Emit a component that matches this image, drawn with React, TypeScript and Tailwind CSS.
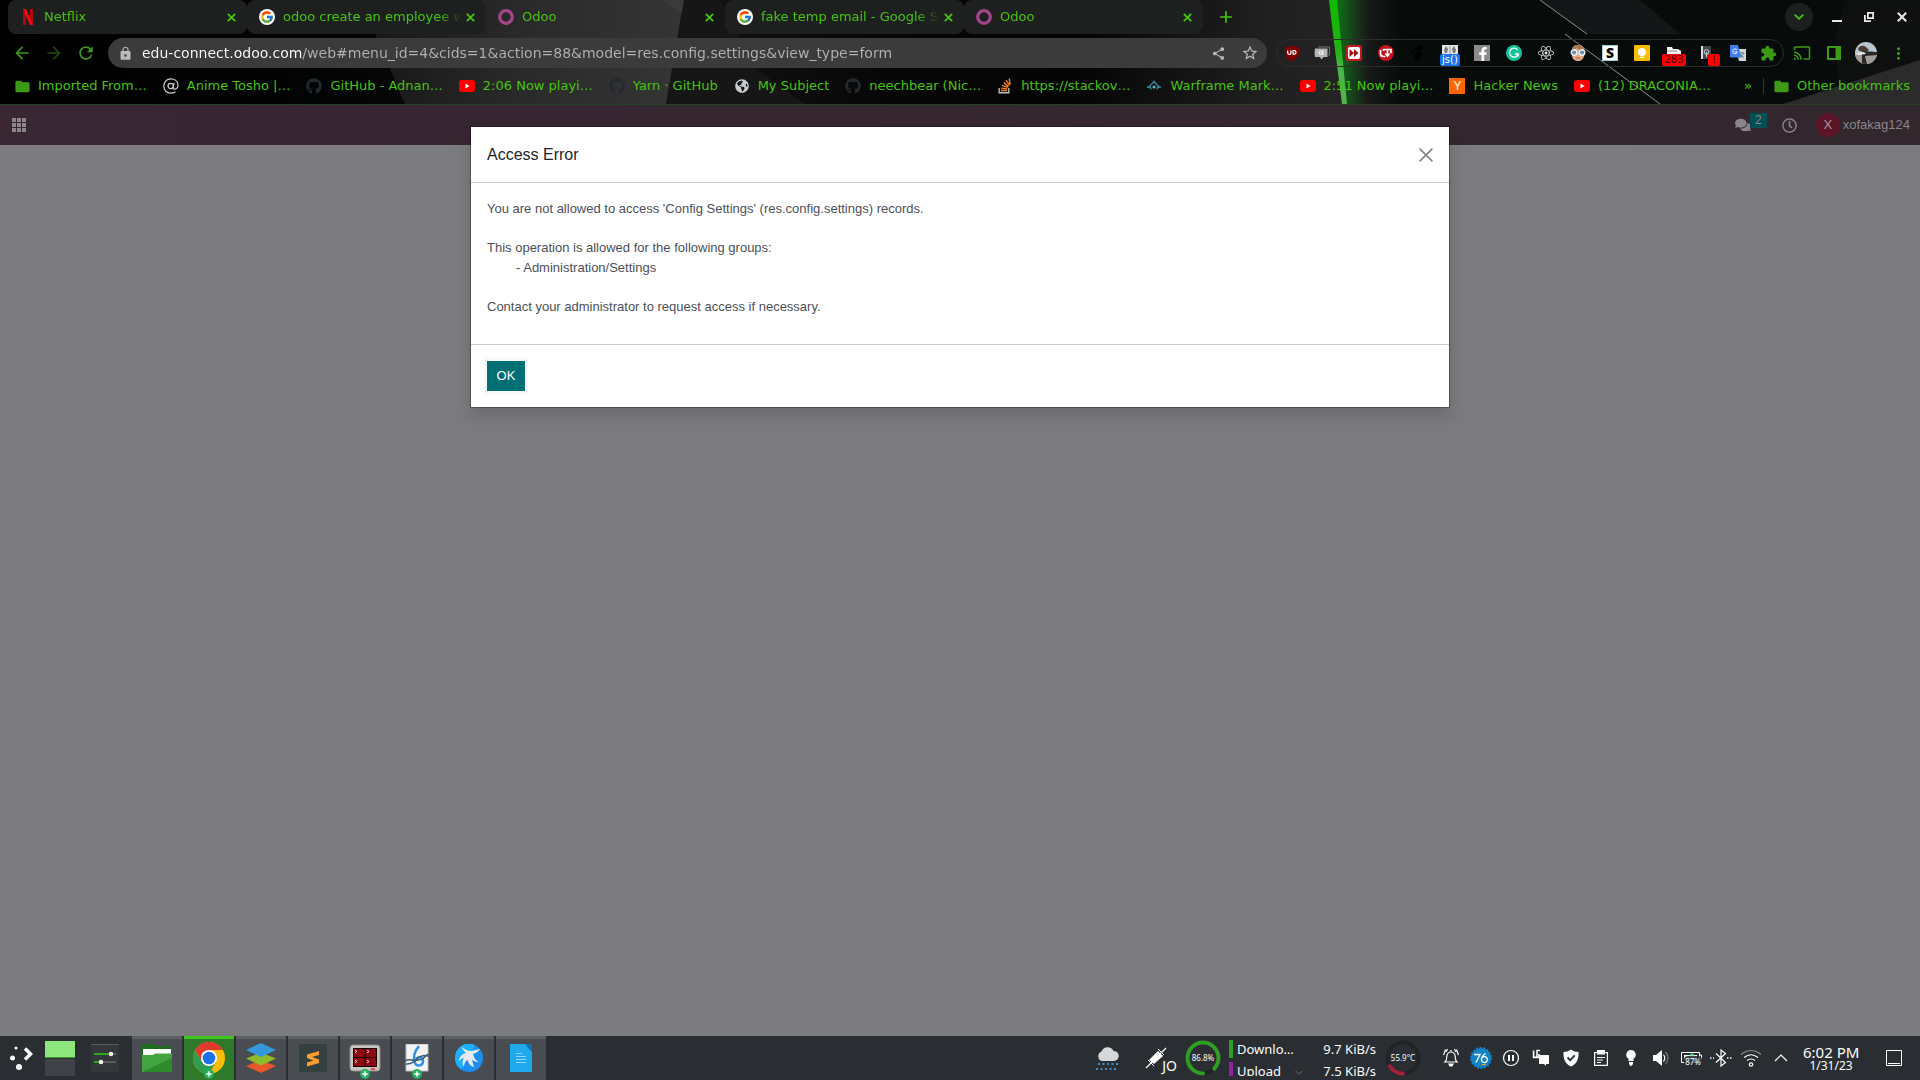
import React from "react";
import { FcGoogle } from "react-icons/fc";
import { FaGithub, FaFacebookF, FaReact, FaComments, FaRegClock, FaGlobeAmericas } from "react-icons/fa";
import {
  MdArrowBack, MdArrowForward, MdRefresh, MdLock, MdShare, MdStarBorder, MdExtension, MdCast, MdFolder, MdAdd, MdMoreVert,
} from "react-icons/md";

type Item = { icon: React.ReactNode; label: string };

/* ---------- favicons ---------- */

const Netflix = () => (
  <svg width="16" height="16" viewBox="0 0 16 16">
    <path d="M3 0h3v16H3zM10 0h3v16h-3z" fill="#b1060f" />
    <path d="M3 0h3l7 16h-3z" fill="#f40612" />
  </svg>
);
const Google = () => (
  <span className="flex size-4 items-center justify-center rounded-full bg-white">
    <FcGoogle size={14} />
  </span>
);
const OdooRing = () => (
  <svg width="16" height="16" viewBox="0 0 16 16">
    <circle cx="8" cy="8" r="6.300" fill="none" stroke="#a24689" strokeWidth="3.300" />
  </svg>
);
const At = () => (
  <svg width="16" height="16" viewBox="0 0 16 16" fill="none" stroke="#d0d0d0" strokeWidth="1.200">
    <circle cx="7.700" cy="8" r="2.700" />
    <path d="M11 4.800 10.300 9.500q-.2 1.800 1.300 1.700C14 11 15.200 9 15 6.800 14.600 3 11.500.8 8 .8 3.800.8.800 4 .8 8.200c0 4.200 3 7 7 7 2 0 3.400-.5 4.700-1.400" />
  </svg>
);
const Youtube = () => (
  <svg width="16" height="16" viewBox="0 0 16 16">
    <rect y="2" width="16" height="12" rx="3" fill="#f00" />
    <path d="M6.500 5.600v4.800L10.600 8z" fill="#fff" />
  </svg>
);
const Lotus = () => (
  <svg width="16" height="16" viewBox="0 0 16 16" fill="none" stroke="#2f7f97" strokeWidth="1.500">
    <path d="M1 9.500 4 8l4-4.500L12 8l3 1.500M4 8l1 3.500M12 8l-1 3.500" />
    <circle cx="8" cy="9" r="1.600" fill="#5bb3c9" stroke="none" />
  </svg>
);
const Hacker = () => (
  <span className="flex size-4 items-center justify-center bg-[#f60] font-['Liberation_Sans'] text-[12px] leading-4 text-white">Y</span>
);
const Folder = () => <MdFolder size={17} className="-mx-px shrink-0 text-[#3d9a16]" />;

const tabs: (Item & { active?: boolean; divider?: boolean })[] = [
  { icon: <Netflix />, label: "Netflix", divider: true },
  { icon: <Google />, label: "odoo create an employee w" },
  { icon: <OdooRing />, label: "Odoo", active: true },
  { icon: <Google />, label: "fake temp email - Google S", divider: true },
  { icon: <OdooRing />, label: "Odoo" },
];

const github = <FaGithub size={16} color="#24292f" />;
const bookmarks: Item[] = [
  { icon: <Folder />, label: "Imported From…" },
  { icon: <At />, label: "Anime Tosho |…" },
  { icon: github, label: "GitHub - Adnan…" },
  { icon: <Youtube />, label: "2:06 Now playi…" },
  { icon: github, label: "Yarn · GitHub" },
  { icon: <FaGlobeAmericas size={14} color="#c9ccd1" className="mx-px" />, label: "My Subject" },
  { icon: github, label: "neechbear (Nic…" },
  {
    icon: (
      <svg width="16" height="16" viewBox="0 0 16 16" fill="none" strokeWidth="1.400">
        <path d="M2.200 10v4.800h9.600V10" stroke="#bcbbbb" />
        <path d="M4 12.600h6M4.200 10.200l6 .8M4.900 7.400l5.800 2M6.800 4.600l4.800 4M9 2.200l3.500 5M12.200.6l1 6" stroke="#f48024" />
      </svg>
    ),
    label: "https://stackov…",
  },
  { icon: <Lotus />, label: "Warframe Mark…" },
  { icon: <Youtube />, label: "2:51 Now playi…" },
  { icon: <Hacker />, label: "Hacker News" },
  { icon: <Youtube />, label: "(12) DRACONIA…" },
];

/* ---------- extension icons ---------- */

const Svg = ({ children }: { children: React.ReactNode }) => (
  <svg width="16" height="16" viewBox="0 0 16 16" className="shrink-0">{children}</svg>
);

const extensions: { name: string; icon: React.ReactNode; badge?: string; badgeClass?: string }[] = [
  {
    name: "uBlock Origin",
    icon: (
      <Svg>
        <path d="M8 0c2 1.500 4.500 2.200 7 2.200V8c0 4-3.500 6.500-7 8-3.500-1.500-7-4-7-8V2.200C3.500 2.200 6 1.500 8 0z" fill="#800000" />
        <path d="M3.700 5.500v2.300q0 1.500 1.600 1.500t1.600-1.500V5.500" stroke="#fff" strokeWidth="1.300" fill="none" />
        <path d="M9 5.600v3.600h1.200a1.800 1.800 0 0 0 0-3.600z" stroke="#fff" strokeWidth="1.200" fill="none" />
      </Svg>
    ),
  },
  {
    name: "Quick chat",
    icon: (
      <Svg>
        <path d="M4 2h11.500v8H14" stroke="#777" fill="none" />
        <path d="M1 3.500h12.500V12H9.500L7.500 14.500 6 12H1q-1-4 0-8.500z" fill="#b5b5b5" />
        <circle cx="6.600" cy="7.700" r="1.700" fill="none" stroke="#fff" />
        <path d="M8.800 5.700v4" stroke="#fff" />
      </Svg>
    ),
  },
  {
    name: "Fast forward",
    icon: (
      <Svg>
        <rect width="16" height="16" rx="2" fill="#c4161c" />
        <rect x="2" y="2" width="12" height="12" rx="2" fill="#fff" />
        <path d="m3.500 4 4.500 4-4.500 4zM8 4l4.500 4L8 12z" fill="#a01015" />
      </Svg>
    ),
  },
  {
    name: "Downloader",
    icon: (
      <Svg>
        <circle cx="8" cy="8" r="8" fill="#c3141b" />
        <path d="M2.500 5v3.500q0 3 3 3h2M5.500 6V4.500H13V8M9.500 4.500V10" stroke="#fff" strokeWidth="1.700" fill="none" />
        <path d="M6.500 8.500h6l-3 4z" fill="#fff" />
      </Svg>
    ),
  },
  {
    name: "GNOME",
    icon: (
      <Svg>
        <g fill="#000">
          <ellipse cx="10" cy="3" rx="2.300" ry="3" transform="rotate(20 10 3)" />
          <circle cx="6.500" cy="3.500" r="1.300" />
          <circle cx="4.200" cy="5" r="1.100" />
          <circle cx="2.400" cy="7" r=".9" />
          <path d="M9 6.500c-3 0-5 2-4.500 5 .4 2.500 2.500 4.500 4.500 4 2-.6 1.200-2.500.4-3.500 1.500-.8 3-2 2.600-3.600C11.700 7 10.500 6.500 9 6.500z" />
        </g>
      </Svg>
    ),
  },
  {
    name: "Injector",
    icon: (
      <Svg>
        <path d="M0 0h16v9H0z" fill="#e4e4e4" />
        <path d="M2 5 4 1l2 3-1 4H3zM14 5l-2-4-2 3 1 4h2z" fill="#777" />
        <path d="M7 1h2v8H7z" fill="#bbb" />
      </Svg>
    ),
    badge: "js()",
    badgeClass: "bg-[#1a73e8] text-white",
  },
  {
    name: "Facebook",
    icon: (
      <span className="flex size-4 items-end justify-end bg-[#8b8b8b]">
        <FaFacebookF size={14} color="#fff" />
      </span>
    ),
  },
  {
    name: "Grammarly",
    icon: (
      <Svg>
        <circle cx="8" cy="8" r="8" fill="#15c39a" />
        <path d="M11.500 4.800A4.500 4.500 0 1 0 12.300 9H8.800M12.200 9v2.500" stroke="#fff" strokeWidth="1.300" fill="none" />
      </Svg>
    ),
  },
  { name: "React tools", icon: <FaReact size={16} color="#e9e9e9" /> },
  {
    name: "Reader",
    icon: (
      <Svg>
        <path d="M2 6c0-4 2-6 6-6s6 2 6 6v4c0 4-3 6-6 6s-6-2-6-6z" fill="#e0aa80" />
        <path d="M2 5c0-3 2-5 6-5s6 2 6 5H9L7 3 5 5z" fill="#a87c52" />
        <circle cx="4" cy="7.500" r="2.800" fill="#5f99a6" stroke="#eef" strokeWidth="1.400" />
        <circle cx="12" cy="7.500" r="2.800" fill="#5f99a6" stroke="#eef" strokeWidth="1.400" />
        <path d="M6 13h4" stroke="#b06a50" />
      </Svg>
    ),
  },
  {
    name: "Stylus",
    icon: (
      <span className="flex size-4 items-center justify-center border border-[#9fd3e3] bg-white font-['Noto_Sans'] text-[14px] leading-4 font-black text-black">S</span>
    ),
  },
  {
    name: "Keep",
    icon: (
      <Svg>
        <rect width="16" height="16" rx="1" fill="#fbbc04" />
        <path d="M8 3a4 4 0 0 0-2 7.500V11h4v-.5A4 4 0 0 0 8 3zM6 11.700h4v1.300H6z" fill="#fff" />
      </Svg>
    ),
  },
  {
    name: "Collector",
    icon: (
      <Svg>
        <path d="M1 2h5l1 2h5l3 2v3H1z" fill="#f1f1f1" />
        <path d="M1 6h10" stroke="#999" />
      </Svg>
    ),
    badge: "283",
    badgeClass: "bg-[#f00] text-[#400]",
  },
  {
    name: "Proxy",
    icon: (
      <Svg>
        <path d="M3 1h10v13H3z" fill="#42484d" />
        <path d="M3 1h2v13H3z" fill="#ddd" />
        <circle cx="8.500" cy="7" r="2.300" fill="none" stroke="#cfd5d9" />
        <path d="M8.500 7v5" stroke="#cfd5d9" />
      </Svg>
    ),
    badge: "!",
    badgeClass: "bg-[#f00] text-[#400] ml-4",
  },
  {
    name: "Translate",
    icon: (
      <Svg>
        <path d="M6 4h10v12H9z" fill="#d5d5d5" />
        <path d="M9.500 8h5M12 7v1M13.500 8c-.5 2-2 3.500-3.500 4.500M10.500 9.500c.8 1.300 2 2.500 3.500 3" stroke="#607d8b" fill="none" />
        <path d="M0 0h8l3.500 12.500H1L0 12z" fill="#3f7de8" />
        <path d="M7 5A2.300 2.300 0 1 0 7.300 7H5.200" stroke="#fff" fill="none" />
      </Svg>
    ),
  },
  { name: "Extensions", icon: <MdExtension size={17} color="#3d9a16" /> },
];

/* ---------- browser chrome ---------- */

const ThemeArt = () => (
  <svg className="absolute inset-0 h-full w-full" viewBox="0 0 1920 104" preserveAspectRatio="none" aria-hidden="true">
    <defs>
      <linearGradient id="base" x1="0" x2="1">
        <stop offset="0" stopColor="#000" />
        <stop offset=".18" stopColor="#030404" />
        <stop offset=".34" stopColor="#141414" />
        <stop offset=".46" stopColor="#070707" />
        <stop offset=".56" stopColor="#040404" />
        <stop offset=".66" stopColor="#202020" />
        <stop offset=".7" stopColor="#242424" />
        <stop offset=".73" stopColor="#070b0a" />
        <stop offset="1" stopColor="#080b0b" />
      </linearGradient>
      <linearGradient id="slab" x1="0" x2="1">
        <stop offset="0" stopColor="#161616" />
        <stop offset=".5" stopColor="#2a2a2a" />
        <stop offset="1" stopColor="#353535" />
      </linearGradient>
      <linearGradient id="glow" x1="0" x2="1">
        <stop offset="0" stopColor="#0a7a14" stopOpacity=".95" />
        <stop offset="1" stopColor="#0a5a14" stopOpacity="0" />
      </linearGradient>
      <linearGradient id="beam" x1="0" y1="0" x2="0" y2="1">
        <stop offset="0" stopColor="#12b800" />
        <stop offset=".5" stopColor="#20b414" />
        <stop offset=".65" stopColor="#4cb648" />
        <stop offset="1" stopColor="#58b052" />
      </linearGradient>
    </defs>
    <path d="M0 0H1920V104H0z" fill="url(#base)" />
    <path d="M360 0H684L666 104H405L375 34z" fill="url(#slab)" />
    <path d="M662 0H685L683 14z" fill="#3a3a3a" />
    <path d="M684 0H720L755 68 805 104H666z" fill="#161616" />
    <path d="M1336 0H1368L1364 104H1346z" fill="url(#glow)" />
    <path d="M1329 0H1337L1347 104H1342L1333 34z" fill="url(#beam)" />
    <path d="M1540 0 1587 34H1680L1640 0z" fill="#151617" />
    <path d="M1540 0 1587 34M1565 34 1660 104" stroke="#8d8d8d" fill="none" />
    <path d="M1846 0H1920V60L1838 88 1835 34z" fill="#0e1010" />
    <path d="M1783 104 1920 60V104z" fill="#2b2b2b" />
  </svg>
);

const TabStrip = () => (
  <div role="tablist" className="relative flex h-[34px] shrink-0 items-center pl-2">
    {tabs.map((t, i) => (
      <div
        key={i}
        className={
          "relative flex h-full w-[239px] min-w-0 items-center rounded-lg pr-2 pl-3 " + (t.active ? "" : "bg-[#1e201f]")
        }
      >
        {t.icon}
        <button role="tab" aria-selected={!!t.active} className="ml-2 flex-1 overflow-hidden text-left whitespace-nowrap [mask-image:linear-gradient(to_right,black_calc(100%-24px),transparent)]">
          {t.label}
        </button>
        <button aria-label={"Close " + t.label} className="flex size-4 items-center justify-center">
          <svg width="9" height="9" viewBox="0 0 9 9" stroke="currentColor" strokeWidth="1.800"><path d="m.8.8 7.400 7.400M8.200.8.800 8.200" /></svg>
        </button>
        {t.divider && <span className="absolute top-[7px] -right-px h-5 w-px bg-[#2f7a14]" />}
      </div>
    ))}
    <button aria-label="New tab" className="ml-[13px]"><MdAdd size={20} /></button>
    <div className="ml-auto flex items-center text-white">
      <button aria-label="Search tabs" className="flex size-7 items-center justify-center rounded-full bg-[#1e201f] text-[#46c40f]">
        <svg width="10" height="6" viewBox="0 0 10 6" fill="none" stroke="currentColor" strokeWidth="1.800"><path d="m.6.6 4.400 4.200L9.400.6" /></svg>
      </button>
      <button aria-label="Minimize" className="ml-[15px] flex h-5 w-[17px] items-end justify-center pb-[5px]"><span className="h-0.5 w-2.5 bg-[#e8e8e8]" /></button>
      <button aria-label="Restore" className="ml-4 flex w-4 justify-center">
        <svg width="10" height="10" viewBox="0 0 10 10" fill="none" stroke="#e8e8e8" strokeWidth="1.800"><path d="M3.900.9h5.200v5.200H3.900zM.9 3v6.100H7" /></svg>
      </button>
      <button aria-label="Close window" className="mr-[9px] ml-4 flex w-[18px] justify-center">
        <svg width="10" height="10" viewBox="0 0 10 10" stroke="#e8e8e8" strokeWidth="2"><path d="m.8.8 8.400 8.400M9.200.8.800 9.200" /></svg>
      </button>
    </div>
  </div>
);

const Toolbar = () => (
  <div className="relative flex h-[38px] shrink-0 items-center pl-1.5">
    <div className="flex h-[30px] items-center text-[#3d9a16]">
      <button aria-label="Back" className="flex w-8 justify-center"><MdArrowBack size={20} /></button>
      <button aria-label="Forward" className="flex w-8 justify-center text-[#1d4a0c]"><MdArrowForward size={20} /></button>
      <button aria-label="Reload" className="flex w-8 justify-center"><MdRefresh size={20} /></button>
    </div>
    <div className="ml-1.5 flex h-[30px] min-w-0 flex-1 items-center rounded-full bg-[#3b3b3b] pr-2 pl-2.5 text-[#b8babd]">
      <MdLock size={15} className="shrink-0" />
      <input
        aria-label="Address"
        defaultValue="edu-connect.odoo.com/web#menu_id=4&cids=1&action=88&model=res.config.settings&view_type=form"
        className="ml-[9px] min-w-0 flex-1 bg-[linear-gradient(to_right,#ffffff_160px,#b0b2b5_160px)] bg-clip-text text-sm text-transparent outline-none"
      />
      <button aria-label="Share" className="flex w-8 justify-center"><MdShare size={15} /></button>
      <button aria-label="Bookmark" className="-mr-[7px] flex w-8 justify-center"><MdStarBorder size={18} /></button>
    </div>
    <div className="ml-[9px] flex h-7 items-center rounded-full border border-[#2c2e2e]">
      {extensions.map((e, i) => (
        <button key={i} aria-label={e.name} className={"relative flex h-7 items-center justify-center " + (i === 0 || i === 15 ? "w-[29px]" : "w-8")}>
          {e.icon}
          {e.badge && (
            <span className={"absolute top-[15px] min-w-3 rounded-[2px] px-0.5 text-center text-[10px] leading-3 " + e.badgeClass}>{e.badge}</span>
          )}
        </button>
      ))}
    </div>
    <div className="mr-1.5 ml-0.5 flex items-center text-[#3d9a16]">
      <button aria-label="Cast" className="flex w-8 justify-center"><MdCast size={18} /></button>
      <button aria-label="Side panel" className="flex w-8 justify-center">
        <svg width="14" height="14" viewBox="0 0 14 14" fill="none" stroke="currentColor" strokeWidth="2"><path d="M1 1h12v12H1z" /><path d="M8.500 1H13v12H8.500z" fill="currentColor" stroke="none" /></svg>
      </button>
      <button aria-label="Profile" className="flex w-8 justify-center">
        <svg width="22" height="22" viewBox="0 0 22 22">
          <clipPath id="face"><circle cx="11" cy="11" r="11" /></clipPath>
          <g clipPath="url(#face)">
            <path d="M0 0h22v22H0z" fill="#b9c6d0" />
            <path d="M0 13h22v9H0z" fill="#a39b96" />
            <path d="M3 6q4-4 8-1l3 3-3 2-7-1z" fill="#4b3a33" />
            <path d="M7 9l15 1v3l-12 1 2 8H7z" fill="#2b2728" />
            <path d="M2 11l7-1 2 2-8 1z" fill="#e6e6e8" />
          </g>
        </svg>
      </button>
      <button aria-label="Menu" className="flex w-8 justify-center"><MdMoreVert size={19} /></button>
    </div>
  </div>
);

const Bookmarks = () => (
  <nav aria-label="Bookmarks" className="relative flex h-8 shrink-0 items-center pr-2.5 pb-1 pl-3.5">
    <div className="flex items-center gap-4">
      {bookmarks.map((b, i) => (
        <a key={i} href="#" className="flex items-center gap-2 whitespace-nowrap">
          <span className="flex w-4 shrink-0 justify-center">{b.icon}</span>{b.label}
        </a>
      ))}
    </div>
    <button aria-label="More bookmarks" className="ml-auto pr-[11px]">»</button>
    <span className="h-4 w-px bg-[#1d4a0c]" />
    <a href="#" className="ml-2.5 flex items-center gap-2 whitespace-nowrap"><Folder />Other bookmarks</a>
  </nav>
);

/* ---------- web page ---------- */

const OdooNav = () => (
  <header className="flex h-10 shrink-0 items-center bg-linear-to-r from-[#382633] to-[#33272e] pr-2.5 pl-3 text-[13px] text-[#8b8589]">
    <button aria-label="Apps">
      <svg width="14" height="14" viewBox="0 0 14 14" fill="#8b8589">
        {[0, 5, 10].map((y) => [0, 5, 10].map((x) => <rect key={x + "-" + y} x={x} y={y} width="4" height="4" />))}
      </svg>
    </button>
    <button aria-label="Messages" className="relative ml-auto flex w-8 items-center"><FaComments size={16} />
      <span className="absolute -top-[4px] left-[15px] w-[17px] bg-[#015054] text-center text-xs leading-[15px]">2</span>
    </button>
    <button aria-label="Activities" className="ml-[15px]"><FaRegClock size={15} /></button>
    <button className="ml-[19px] flex items-center gap-[3px]">
      <span className="flex size-6 items-center justify-center rounded-full bg-[#5c1428] text-[#a39aa0]">X</span>
      xofakag124
    </button>
  </header>
);

const Dialog = () => (
  <div className="absolute inset-0 flex items-start justify-center pt-[21px]">
    <section role="dialog" aria-label="Access Error" className="w-full max-w-[980px] border border-black/30 bg-white bg-clip-padding text-[13px] text-[#4c5059] shadow-[0_8px_16px_rgba(0,0,0,0.15)]">
      <header className="flex h-14 items-center justify-between border-b border-[#c9ccd2] px-4">
        <h1 className="text-base text-[#212529]">Access Error</h1>
        <button aria-label="Close" className="text-[#808080]">
          <svg width="14" height="14" viewBox="0 0 14 14" stroke="currentColor" strokeWidth="1.500"><path d="m.6.6 12.800 12.800M13.400.6.600 13.400" /></svg>
        </button>
      </header>
      <div className="space-y-[19px] px-4 pt-4 pb-[27px] leading-5">
        <p>You are not allowed to access 'Config Settings' (res.config.settings) records.</p>
        <p>This operation is allowed for the following groups:<br /><span className="pl-[29px]">- Administration/Settings</span></p>
        <p>Contact your administrator to request access if necessary.</p>
      </div>
      <footer className="flex border-t border-[#c9ccd2] px-4 pt-4 pb-4">
        <button className="h-[30px] w-[38px] bg-[#017075] text-white shadow-[0_0_0_3px_#f8f9fa]">OK</button>
      </footer>
    </section>
  </div>
);

/* ---------- desktop panel ---------- */

const Plus = () => (
  <svg width="10" height="10" viewBox="0 0 10 10"><circle cx="5" cy="5" r="5" fill="#27ae60" /><path d="M5 2.300v5.400M2.300 5h5.400" stroke="#fff" strokeWidth="1.400" /></svg>
);

const tasks: { name: string; icon: React.ReactNode; active?: boolean; plus?: boolean }[] = [
  {
    name: "Files",
    icon: (
      <svg width="30" height="28" viewBox="0 0 30 28">
        <path d="M0 0h12l3 2h15v10H0z" fill="#1f6b1c" />
        <path d="M1 5h28v7H1z" fill="#fff" />
        <path d="M0 11h11l2-1.500h17V28H0z" fill="#43a53f" />
        <path d="M0 28h30V14z" fill="#2f8a2c" />
      </svg>
    ),
  },
  {
    name: "Chrome",
    active: true,
    plus: true,
    icon: (
      <svg width="32" height="32" viewBox="0 0 32 32">
        <circle cx="16" cy="16" r="16" fill="#fbbc04" />
        <path d="M2.140 8A16 16 0 0 0 16 32L22.930 20 16 16 9.070 20z" fill="#2f9e4f" />
        <path d="M2.140 8A16 16 0 0 1 29.860 8H16L9.070 20z" fill="#df3a2d" />
        <circle cx="16" cy="16" r="8" fill="#fff" />
        <circle cx="16" cy="16" r="6.300" fill="#1a73e8" />
      </svg>
    ),
  },
  {
    name: "BlueStacks",
    icon: (
      <svg width="30" height="30" viewBox="0 0 30 30">
        <path d="m0 23 15-6 15 6-15 7z" fill="#e8562a" />
        <path d="m0 15.500 15-6 15 6-15 7z" fill="#8dbb2c" />
        <path d="m0 7 15-7 15 7-15 7z" fill="#3498db" />
      </svg>
    ),
  },
  {
    name: "Sublime Text",
    icon: (
      <svg width="28" height="28" viewBox="0 0 28 28">
        <path d="M0 0h28v28H0z" fill="#33403f" />
        <path d="M20 7v4l-7 2 7 2.500V19L8 22.500v-4l6.500-2L8 14v-3.500z" fill="#ff9d2e" />
      </svg>
    ),
  },
  {
    name: "Terminator",
    plus: true,
    icon: (
      <svg width="32" height="28" viewBox="0 0 32 28">
        <rect x="1" y="1" width="30" height="26" rx="3" fill="#c8c6c0" stroke="#8d8b86" />
        <path d="M4 4h24v19H4z" fill="#1a0203" />
        <path d="M5 5h10.500v8H5zM16.500 5H27v8H16.500zM5 14h10.500v8H5zM16.500 14H27v8H16.500z" fill="#8d0a10" />
        <path d="m6 6 2 1.500L6 9m12-3 2 1.500L18 9M6 16l2 1.500L6 19m12-3 2 1.500-2 1.500" stroke="#fff" strokeWidth=".8" fill="none" />
        <path d="M22 25h4" stroke="#e22" strokeWidth="1.500" />
      </svg>
    ),
  },
  {
    name: "Ink tool",
    plus: true,
    icon: (
      <svg width="26" height="28" viewBox="0 0 26 28">
        <path d="M2 0h22v27H2z" fill="#f3f3f3" stroke="#bdbdbd" />
        <path d="M15 2c-5 6-6 12-4 17 2 4 8 3 8-2 0-4-4-5-7-2" fill="none" stroke="#2e8fe6" strokeWidth="2.500" />
        <path d="M1 17c6-4 8 2 12-2s8-4 12-3M2 20c6 1 8-4 12-4s6-2 10-6" fill="none" stroke="#3c5f73" strokeWidth="1.500" />
      </svg>
    ),
  },
  {
    name: "Bird",
    icon: (
      <svg width="28" height="28" viewBox="0 0 28 28">
        <circle cx="14" cy="14" r="14" fill="#1c8ef0" />
        <path d="M0 14A14 14 0 0 1 20 1L6 25.500A14 14 0 0 1 0 14z" fill="#1fb0fb" />
        <path d="M7 3c2 2 5 4 9 4l9-2c-2 3-4 4-7 5 1 3 2 6 6 8-3 0-5-1-7-2l2 7c-4-1-6-4-6-7-3 1-4 4-4 7-2-3-2-6 0-9-2 0-3 1-5 3 0-4 3-7 7-8-2-2-4-4-4-6z" fill="#e4ebf0" />
      </svg>
    ),
  },
  {
    name: "Writer",
    icon: (
      <svg width="22" height="28" viewBox="0 0 22 28">
        <path d="M0 0h15l7 8v20H0z" fill="#1fa9ec" />
        <path d="M15 0h7v8z" fill="#0b74b4" />
        <path d="M6 9.500h6M6 12.500h10M6 15.500h10M6 18.500h10" stroke="#8ed6fb" />
      </svg>
    ),
  },
];

const Gauge = ({ value, color, dash }: { value: string; color: string; dash: string }) => (
  <div className="relative flex size-9 shrink-0 items-center justify-center">
    <svg className="absolute inset-0" width="36" height="36" viewBox="0 0 36 36" fill="none" strokeWidth="4">
      <circle cx="18" cy="18" r="15.500" stroke="#212427" />
      <circle cx="18" cy="18" r="15.500" stroke={color} strokeLinecap="round" pathLength="100" strokeDasharray={dash} transform="rotate(90 18 18)" />
    </svg>
    <span className="relative text-[8px] whitespace-nowrap">{value}</span>
  </div>
);

const T = ({ children, label }: { children: React.ReactNode; label: string }) => (
  <button aria-label={label} className="flex w-[30px] shrink-0 justify-center">
    <svg width="22" height="22" viewBox="0 0 22 22" fill="none" stroke="#fcfcfc" strokeWidth="1.200">{children}</svg>
  </button>
);

const Tray = () => (
  <div className="flex items-center">
    <T label="Notifications"><path d="M5 15h12c-1.800-1.500-1.500-3-1.700-5C15 7 13.500 5 11 5s-4 2-4.300 5c-.2 2 .1 3.500-1.700 5zM11 3v2M5.500 2.500 3.500 8M16.500 2.500l2 5.500M7.500 2 6 5M14.500 2 16 5" /><path d="M9 17h4l-1 2h-2z" fill="#fcfcfc" /></T>
    <button aria-label="System76" className="flex w-[30px] shrink-0 items-center justify-center">
      <svg width="22" height="22" viewBox="0 0 22 22"><circle cx="11" cy="11" r="10" fill="#1283c4" stroke="#1283c4" strokeWidth="2" strokeDasharray="2 1.500" /><path d="M4 7.500h6l-4 8M15.500 6.500q-4 2.500-4 6a2.900 2.900 0 1 0 2.900-2.800q-2 0-2.700 1.800" fill="none" stroke="#fff" strokeWidth="1.300" /><path d="M12 17.500h4" stroke="#f5a623" /></svg>
    </button>
    <T label="Media"><circle cx="11" cy="11" r="7.500" /><path d="M9 8v6M13 8v6" strokeWidth="2" /></T>
    <T label="Keyboard"><path d="M9 8h10v9h-3v2l-2-2H9z" fill="#fcfcfc" stroke="none" /><path d="M3.600 3.600v6.800H9V7M7 10V3.500h3" strokeWidth="1.600" /></T>
    <T label="Security"><path d="M11 2.500c2 1.700 5 2.500 7.500 2.500.5 7-2 12-7.500 14.500C5.500 17 3 12 3.500 5 6 5 9 4.200 11 2.500z" fill="#fcfcfc" stroke="none" /><path d="m7.500 10.500 2.700 2.700 4.600-4.800" stroke="#2a2e32" strokeWidth="1.800" /></T>
    <T label="Clipboard"><path d="M4.600 5.600h12.800v12.800H4.600zM7 10.500h8M7 13h6M7 15.500h4" /><path d="M7 3h8v4.500H7z" fill="#fcfcfc" stroke="none" /></T>
    <T label="Night light"><path d="M11 3a4.700 4.700 0 0 0-2.500 8.700V14h5v-2.300A4.700 4.700 0 0 0 11 3zM9 15h4v2l-1.500 2h-1L9 17z" fill="#fcfcfc" stroke="none" /></T>
    <T label="Volume"><path d="M3 8h3l6-5v16l-6-5H3z" fill="#fcfcfc" stroke="none" /><path d="M13.500 7.500q2.500 3.500 0 7" /><path d="M15.500 5q5 6 0 12" stroke="#777" /></T>
    <button aria-label="Battery" className="relative flex h-[22px] w-[30px] shrink-0 justify-center">
      <svg width="22" height="22" viewBox="0 0 22 22" fill="none" stroke="#fcfcfc"><path d="M1.500 5.500h18v10h-18z" /><path d="M20 8h1.500v5H20" /><path d="M4 8h13v5H4z" fill="#fcfcfc" stroke="none" /><path d="m10 8 2-1.500 2 1.500z" fill="#2ecc71" stroke="#2ecc71" /></svg>
      <span className="absolute top-[9px] right-1 rounded-sm bg-[#2a2e32]/90 px-px text-[8px] leading-[11px]">87%</span>
    </button>
    <T label="Bluetooth"><path d="m6 6.500 9.500 9L11 19V3l4.500 3.500L6 15.500" /><path d="M0 11h4M17 11h5" strokeDasharray="1.500 1.500" strokeWidth="1.500" /></T>
    <T label="Wi-Fi"><circle cx="11" cy="17.500" r="1.700" /><path d="M7 13.500q4-3 8 0M4 10.500q7-5.500 14 0" /><path d="M1 7.500q10-8 20 0" stroke="#8a8d90" /></T>
    <T label="Show hidden icons"><path d="m5 14 6-6 6 6" /></T>
  </div>
);

const Panel = () => (
  <footer className="flex h-11 shrink-0 items-center overflow-hidden bg-[#2a2e32] font-['Noto_Sans',sans-serif] text-[#fcfcfc]">
    <button aria-label="Applications" className="ml-2 shrink-0">
      <svg width="28" height="28" viewBox="0 0 28 28" fill="#fcfcfc"><circle cx="8" cy="4" r="1.500" /><circle cx="4.500" cy="14" r="2.500" /><circle cx="11" cy="23" r="3" /><path d="M17 4.500 22.500 10 17 15.500" fill="none" stroke="#fcfcfc" strokeWidth="3.500" /></svg>
    </button>
    <div className="ml-[9px] flex w-[30px] shrink-0 flex-col gap-px">
      <button aria-label="Desktop 1" className="h-[17px] border-b border-[#3a9a2c] bg-[#8ce67c]" />
      <button aria-label="Desktop 2" className="h-[17px] bg-[#3f4347]" />
    </div>
    <button aria-label="Settings" className="mr-[13px] ml-4 shrink-0">
      <svg width="28" height="28" viewBox="0 0 28 28"><path d="M0 0h28v28H0z" fill="#33373a" /><path d="M0 0h28v1H0z" fill="#575b5e" /><path d="M3 10h22M3 18h22" stroke="#595d60" strokeWidth="2" /><path d="M3 10h17M3 18h6" stroke="#2fa51d" strokeWidth="2" /><circle cx="20" cy="10" r="2.200" fill="#fff" /><circle cx="10" cy="18" r="2.200" fill="#fff" /></svg>
    </button>
    <div className="flex h-full shrink-0 gap-0.5">
      {tasks.map((t) => (
        <button
          key={t.name}
          aria-label={t.name}
          className={"relative flex h-full w-[50px] items-center justify-center border-t-[3px] pb-1 " + (t.active ? "border-[#3dc61f] bg-[#2f7a2a]" : "border-[#5c5f63] bg-[#494c51]")}
        >
          {t.icon}
          {t.plus && <span className="absolute bottom-px"><Plus /></span>}
        </button>
      ))}
    </div>
    <div className="ml-auto flex h-full shrink-0 items-center">
      <svg width="24" height="26" viewBox="0 0 24 26"><path d="M6 16a5 5 0 0 1-.5-9.500A6.500 6.500 0 0 1 17.500 6 5 5 0 0 1 18 16z" fill="#d5d8da" /><path d="M2 19h20M0 24h20" stroke="#3d8fc4" strokeWidth="2" strokeDasharray="2 2.500" /></svg>
      <div className="ml-6 flex items-center">
        <svg width="24" height="24" viewBox="0 0 24 24" fill="#fcfcfc"><path d="M2 22 22 2" stroke="#fcfcfc" strokeWidth="1.300" /><path d="m5 14 9-9 5 5-9 8z" /><path d="m14 3 6 6M4 14l6 6" stroke="#fcfcfc" /></svg>
        <span className="-ml-1.5 pt-4 text-[14px] leading-5">JO</span>
      </div>
      <div className="ml-2"><Gauge value="86.8%" color="#2f9e22" dash="87 100" /></div>
      <div className="ml-2 flex h-9 w-[147px] flex-col gap-1 overflow-hidden text-[13px] leading-[18px]">
        <div className="flex h-[18px] shrink-0"><span className="mr-1 w-1 bg-[#2f9e22]" />Downlo…<span className="ml-auto">9.7 KiB/s</span></div>
        <div className="flex h-[18px] shrink-0"><span className="mr-1 w-1 bg-[#8e24a0]" />Upload<svg className="mt-2 ml-auto" width="8" height="6" viewBox="0 0 8 6" fill="none" stroke="#666a6e"><path d="m.5 1 3.500 3 3.500-3" /></svg><span className="ml-5">7.5 KiB/s</span></div>
      </div>
      <div className="ml-[9px]"><Gauge value="55.9°C" color="#a3203c" dash="16 100" /></div>
      <div className="ml-[15px]"><Tray /></div>
      <time className="ml-[7px] flex w-[56px] flex-col text-center"><span className="text-[15px] leading-4 whitespace-nowrap">6:02 PM</span><span className="text-xs leading-3">1/31/23</span></time>
      <button aria-label="Show desktop" className="mr-[18px] ml-[27px]">
        <svg width="16" height="16" viewBox="0 0 16 16" fill="none" stroke="#fcfcfc"><path d="M.5.5h15v15H.5zM2 13.500h12" /></svg>
      </button>
    </div>
  </footer>
);

export default function App() {
  return (
    <div className="flex min-h-screen flex-col overflow-hidden bg-[#7c7c7e] font-['Liberation_Sans',Arial,sans-serif]">
      <div className="relative flex flex-col border-b border-[#24421f] bg-black font-['DejaVu_Sans',sans-serif] text-[13px] text-[#46c40f]">
        <ThemeArt />
        <TabStrip />
        <Toolbar />
        <Bookmarks />
      </div>
      <main className="relative flex flex-1 flex-col">
        <OdooNav />
        <Dialog />
      </main>
      <Panel />
    </div>
  );
}
